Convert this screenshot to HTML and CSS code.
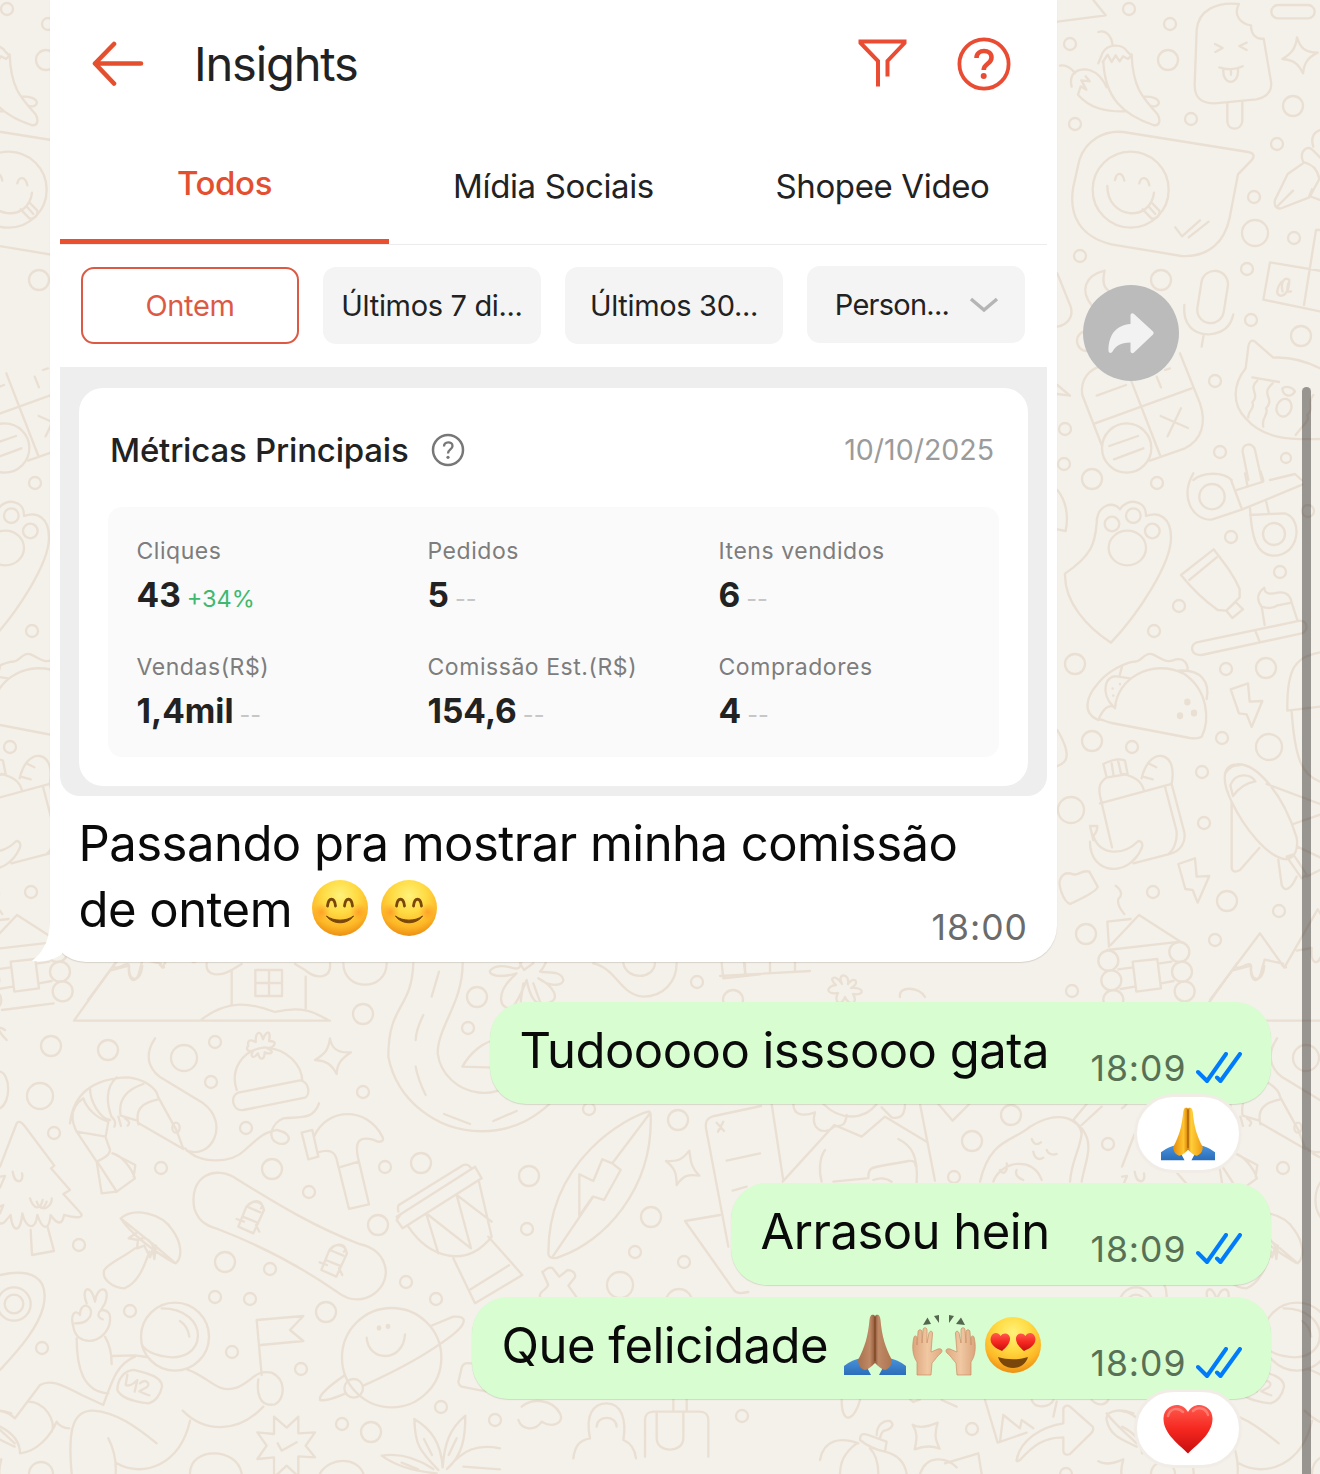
FILE: index.html
```html
<!DOCTYPE html>
<html lang="pt-BR">
<head>
<meta charset="utf-8">
<title>Insights</title>
<link rel="stylesheet" href="styles.css">
</head>
<body>
<svg class="defs" width="0" height="0" aria-hidden="true">
<defs>
<radialGradient id="face" cx=".5" cy=".28" r=".74"><stop offset="0" stop-color="#fff27a"/><stop offset=".4" stop-color="#ffdc45"/><stop offset=".75" stop-color="#fdb827"/><stop offset="1" stop-color="#ea8a10"/></radialGradient>
<radialGradient id="blush"><stop offset="0" stop-color="#ff7b1c" stop-opacity=".5"/><stop offset="1" stop-color="#ff8b1c" stop-opacity="0"/></radialGradient>
<linearGradient id="heart" x1="0" y1="0" x2="0" y2="1"><stop offset="0" stop-color="#ff5a50"/><stop offset=".5" stop-color="#f5281f"/><stop offset="1" stop-color="#c70d10"/></linearGradient>
<linearGradient id="gold" x1="0" x2="1"><stop offset="0" stop-color="#e88b08"/><stop offset=".35" stop-color="#ffc52e"/><stop offset=".5" stop-color="#d98208"/><stop offset=".6" stop-color="#ffd13a"/><stop offset="1" stop-color="#ee9a12"/></linearGradient>
<linearGradient id="tan" x1="0" x2="1"><stop offset="0" stop-color="#a9714d"/><stop offset=".35" stop-color="#c08a66"/><stop offset=".5" stop-color="#8f5a3d"/><stop offset=".6" stop-color="#c08a66"/><stop offset="1" stop-color="#ad7450"/></linearGradient>
<linearGradient id="sleeve" x1="0" y1="0" x2="0" y2="1"><stop offset="0" stop-color="#4a93dc"/><stop offset="1" stop-color="#2b6db8"/></linearGradient>
<linearGradient id="palm" x1="0" x2="1"><stop offset="0" stop-color="#dca57c"/><stop offset=".5" stop-color="#f0c8a2"/><stop offset="1" stop-color="#e0aa82"/></linearGradient>
<symbol id="smile" viewBox="0 0 56 56">
<circle cx="28" cy="28" r="28" fill="url(#face)"/>
<circle cx="9.500" cy="32" r="9" fill="url(#blush)"/><circle cx="46.500" cy="32" r="9" fill="url(#blush)"/>
<path d="M15.500 26c1-9 7-9 8 0M32.500 26c1-9 7-9 8 0" fill="none" stroke="#7a4609" stroke-width="2.800" stroke-linecap="round"/>
<path d="M14.500 36c6 9 21 9 27 0-7 5.500-20 5.500-27 0z" fill="#7a4609" stroke="#7a4609" stroke-linejoin="round"/>
</symbol>
<symbol id="love" viewBox="0 0 56 56">
<circle cx="28" cy="28" r="28" fill="url(#face)"/>
<path d="M17 34C9 31 4 26 6 20c1.500-5 7.500-5 9.500-1 3-4 9-3 9.500 2 .4 5-3.500 9-8 13zM39 34c8-3 13-8 11-14-1.500-5-7.500-5-9.500-1-3-4-9-3-9.500 2-.4 5 3.500 9 8 13z" fill="url(#heart)"/>
<path d="M13 40c9 3 21 3 30 0-2 7-8 11-15 11s-13-4-15-11z" fill="#7a4609"/>
</symbol>
<symbol id="pray-shape" viewBox="0 0 62 62">
<path d="M0 61V52q9-7 18-8l9 17zM62 61V52q-9-7-18-8l-9 17z" fill="url(#sleeve)"/>
<path d="M30 1c-3-1-4 1-4.500 5C24 22 21 33 14 46c0 5 3 9 7 10 4-1 7-4 10-7 3 3 6 6 10 7 4-1 7-5 7-10C41 33 38 22 36.500 6 36 2 35 0 32 1l-1 1z"/>
<path d="M31 3v44" stroke="#7a3c0c" stroke-opacity=".65" stroke-width="1.300" fill="none"/>
</symbol>
<symbol id="hands" viewBox="0 0 64 62">
<path d="M11 11l4.500-7.500L19 10zM22 2l5-1v8zM37 1l5 1-5 7zM44 10l5-6.500L53 11z" fill="#55664f"/>
<g id="hand" fill="url(#palm)" stroke="#c98e65" stroke-width=".7"><path d="M5 61V48C0 41 0 31 2 23c1-2 3-1 3 1l0 7 1-13c0-3 4-3 4 0v11l1-13c0-3 4-3 4 0v13l2-10c1-3 4-2 3.500 1L19 38l7-3c4-1 5 2 3 4-3 2-6 7-9 10l-1 12z"/></g>
<use href="#hand" transform="matrix(-1 0 0 1 64 0)"/>
</symbol>
<symbol id="checks" viewBox="0 0 46 32"><path d="M2 20l9 9L30 2M21 25.500l3.500 3.500L44 2" fill="none" stroke="#007bfc" stroke-width="4" stroke-linecap="round" stroke-linejoin="round"/></symbol>

<g id="tile">
<g transform="scale(.33333) translate(3150 0)">
<path d="M130 0l37 46L0 68M145 96c25-8 40 15 43 40M145 190l12-30c15-30 60-30 75-5l12 12-10 10-15-8-10 15-12-18-12 20-12-22-15 22M160 185c5 110 60 160 150 190 20 5 22-15 13-32-45-50-75-80-78-180M30 197c20-5 35 10 45 22M65 260c-15-60 55-65 85-30 10 12 15 20 20 32M84 284c35 40 80 52 145 50M84 284l8-25 17 10-15-28 25 3-12-15M280 290c25-2 45 5 47 18-2 12-15 12-25 10"/>
<path d="M567 12C500 5 445 30 440 90L434 255c0 40 20 55 60 55l125-12c35-8 48-25 44-53L641 116c-25 3-38-15-38-40-30-5-55-30-36-64zM495 132l23 12-22 12M590 128l-22 10 22 12M508 202c20 8 50 8 70-3M520 208c-4 50 48 50 44 0v-4M543 208v16M532 310v55c2 28 40 28 45 0v-60M741 112c10 32 24 45 62 46-30 15-40 30-44 62-15-30-28-40-62-43 26-15 40-30 44-65z"/>
<rect x="664" y="15" width="130" height="40" rx="20"/>
<path d="M220 396l375 60c15 3 20 10 12 22l-43 45-25 130c-15 70-60 120-145 115l-210-35C90 710 55 645 70 560l18-80c20-60 75-90 132-84zM195 540c5-25 22-25 28 2M268 550c5-23 25-20 30 6M172 558c0 100 130 110 140 20M278 628l27 28c15 2 26-10 23-24l-25-26M298 622l18 20M376 682l20 27 54-48M416 712l60-47"/>
<circle cx="242" cy="569" r="114"/>
<path d="M810 600l-32-12 8-20M675 600l38-78 50-35c20 5 40 20 45 50l-30 55-82 32c-15 5-25-5-21-24zM683 618l46-46M760 487c-15-35 15-55 30-35l40 40M790 440c-10-30 5-45 20-50M810 690h-12l-36 225M660 787l160 27M660 787l-20 112 170 35M695 845c-15 20-18 38-5 42 18 2 28-20 28-48-22-12-25 20-20 35M715 850c-5 20-5 28 8 24"/>
<rect x="448" y="812" width="80" height="158" rx="40" transform="rotate(9 488 890)"/>
<path d="M403 915c-5 55 25 90 75 88 40-3 65-25 72-60M461 1005l-6 35M164 812c-60 15-75 60-38 105M164 812c-10 40 0 60 30 70M22 820l40 100c10 30-10 55-40 60M22 1155l38 32-38-5"/>
<path d="M165 1095c-50 10-75 45-68 90l58 150M235 1120l95 245M135 1270l290-105M390 1060l60 150c20 60 5 110-45 135l-105 37M140 1187l88-32M320 1130l13 32M360 1105l-15 5M332 1248l82 36M393 1225l-40 84M178 1338l86-30M192 1378l88-33"/>
<circle cx="230" cy="1344" r="74"/>
<path d="M810 1105c-40-20-90-35-140-32l-55-48c-10-8-18 0-20 15l-8 65c-40 50-40 110 0 150 50 60 130 65 223 62M607 1132l80 14M622 1142c-30 25 10 40-15 65 10 20-15 25-12 45M668 1150c-40 35 10 45-20 75 10 20-15 25-8 55M697 1166c10-10 30-5 38 8-10 18-35 18-38-8zM790 1185c-20 20 5 40-18 60 8 20-10 25-35 60"/>
<ellipse cx="702" cy="1223" rx="22" ry="27" transform="rotate(20 702 1223)"/>
<path d="M595 1440l-17-85c-2-25 30-30 37-5l20 90M660 1440l75-18 20 18M430 1440c30-25 90-25 115 0"/>
</g>
<g transform="scale(.33333) translate(3150 1440)">
<circle cx="486" cy="50" r="38"/><circle cx="672" cy="162" r="33"/>
<path d="M430-20c-40 70-5 140 55 139l90-30 182-75M543 0l32 85M560 30l80-25M585-20l8 40M632-25l8 25M600 85c5 90 20 140 70 142 80 0 90-110 35-127l-105 5M648 62l8 35"/>
<path d="M140 130c0-55 50-70 70-42 20-35 80-30 78 20 40-15 75 5 75 65 0 80-100 230-180 315-70-45-140-120-138-207 80-55 90-90 95-151z"/>
<circle cx="186" cy="132" r="22"/><circle cx="250" cy="107" r="22"/><circle cx="307" cy="153" r="22"/><ellipse cx="232" cy="204" rx="56" ry="52"/>
<path d="M22 30c25 30 35 75 25 123l-25-5M491 208l-98 77c40 50 75 80 110 105l26 2 40-40v-25c-20-45-40-70-78-119zM500 232l-82 68M529 392l28-26 22 22-32 26zM440 487l310-65c25 2 25 30 5 38l-300 65c-35 0-35-28-15-38zM617 455l12 30M635 380l9 55M635 380c-20-25-8-45 8-57 0 20 20 20 40 15 30-5 40 15 42 30l-42 8c-12 8-30 10-48 4zM725 368l17 52"/>
<path d="M145 720c-50-20-35-70-5-105 35-45 85-65 110-70 25 5 30-30 58-22 25 10 40 30 70 15 25-5 35 15 35 30M145 720c20-50 45-45 50-35 5-90 110-150 205-105 75 50 80 140 55 190-10 8-20 5-35 4l-235-45c-25-5-30-15-40-9zM208 590l8-30M190 680c-40-40-25-100 15-90l35 5M385 572c70-5 95 35 85 85M188 625v1M210 612v1M190 646v1M542 628l52-18 5 55 38-2-32 78-15-38-23-3z"/>
<path d="M390 706v2M412 665v2M432 698v2" stroke-width="19"/>
<path d="M810 517c-70 15-100 40-98 175l98-12M725 695c10 140 30 190 85 210M22 750c35 60 40 95 0 108"/>
<path d="M170 892l-10-40c20-10 45-20 65-10l8 40-60 10M185 850l6 38M205 845l8 36M170 892c-20 15-25 25-20 55l36 155M150 970l215-58M220 882c35 10 55 20 62 50M275 895c10-45 35-70 60-67 30 5 38 40 30 85M295 850l24 12M278 890l30 8M345 920l34 130c5 30-8 60-22 70M365 912l38 145c5 30-10 55-43 65l-110 28M130 1080l-10-42h22c0 20-5 20-12 30 20 60 90 60 135 15 10 0 15 10 10 22-40 90-155 80-155-20"/>
<path d="M545 965c-30-60-30-110 15-112 60-5 140 90 180 220 5 35-5 60-30 65-60-5-130-100-165-173zM549 948l-8-32c15-40 60-35 75-12-30 5-50 20-67 44zM525 880c15-20 25-25 45-25M545 965v200c5 15 15 10 25 5l58-66M650 912l160 60M730 1032l80-28M685 1140l10 75c10 25 30 10 45-25M710 1130l45 65 15-12-40-60zM742 1100l68 32M770 1190l40-20M32 1195c10-20 30-15 38-12 15 5 25-15 48-8l25 45c0 15-70 45-82 52-20-5-40-60-29-77zM385 1152l50-17 5 55 38-2-35 80-15-38-22-3zM197 1217c20 15 20 30 8 40-5 20 10 35 18 45M177 1400l-5-75 70-8M182 1395l85-90 125 80-220 25"/>
<circle cx="175" cy="1442" r="30"/><circle cx="184" cy="1501" r="30"/><circle cx="190" cy="1560" r="30"/><circle cx="388" cy="1416" r="30"/><circle cx="396" cy="1475" r="30"/><circle cx="404" cy="1534" r="30"/>
<path d="M205 1468l43-6M212 1527l42-7M330 1450l34-5M333 1510l38-7M248 1445l74-8 11 88-74 10zM222 1590l155-20M480 1560l150-200 73 103 100-175 40 60M545 1472l58-15c-5 50 25 60 33 10l8-28 55 12M740 1412l45-8c-5 50 20 50 25 30"/>
</g>
<g transform="scale(.33333) translate(0 2880)">
<path d="M345 10L222 182H990M345 10c-10 10 0 18 20 8 15-8 25-10 22 10 0 40 35 40 40-10M480 15l12 7M695 30v105M917 50v95M620 10c-5 40 40 40 75 20l30-18M990 10c5 45-40 50-75 20l-30-18M605 178c80-60 145-50 220-22 80-20 120 0 160 25M766 30h80v78h-80zM807 30v78M766 69h80M1030 10c0 85 130 85 130 0M1240 10c-5 140-75 120-75 280a285 275 0 0 0 560 0M1388 10c0 120-75 190-75 270a140 136 0 0 0 270 30M1317 35l-22 75M1270 165c-15 30-22 50-23 75M1247 320c5 30 15 55 30 85M1332 462l78 30M1480 483l70-30M1555 325l-168-5c20-35 60-80 120-85"/>
<path d="M465 235c-40 60-10 105 30 125l115 70c80 60 25 170-50 142M210 490c10-90 70-135 175-138 45 5 85 30 90 60l55 100 20 55-135-78M230 515l60 90 15 95 45-5 55-40c-10-30-40-70-68-75M230 515c-25-50-10-80 20-100 10 30 40 60 75 70l-8 45zM290 605c20-10 40-20 40-35l-12-35M270 385c0 40 30 90 60 95M350 352c-35 30-30 80-15 120M430 372c-60 20-75 55-68 95l50 15M475 418c-50 10-70 30-60 75M335 470c10 10 12 22 8 30M355 470l8 28M375 475c15 10 15 15 8 22M295 610l55 85M338 580l68 35-5 35M555 565c45 50 140 45 180 5 60-55 60-50 95-60 55 10 40 50 5 40-40-15-15-65 15-75 50-5 90 5 107-45"/>
<ellipse cx="528" cy="503" rx="11" ry="15"/>
<path d="M710 390c-20-60 15-120 85-128 70 5 110 55 112 100M715 398l185-37c30 5 30 45 15 52l-185 37c-35 5-40-45-15-52zM745 258c-5-20 10-20 22-12 0-35 15-35 22-8 10-30 25-25 18 5 30 0 15 20-5 22 25 10 10 20-8 12 0 25-15 25-20 3-15 20-25 8-14-8-15 5-25-5-15-14zM990 235c5 32 24 45 63 42-30 20-42 35-43 65-15-28-30-40-65-42 30-18 40-30 45-65zM905 518l32-8 18 80-30 8zM942 530c40-90 160-90 205 0 8 15-8 20-25 10-50-15-60 10-45 65l30 128-60 14-35-140c-5-35-25-40-58-30M1018 622l58-17"/>
<path d="M20 240c-35-35-25-45-5-30M0 335c30 5 35 90 0 110M0 620l48-125c5-15 15-10 25 2l90 120-10 8 57 65-20 12 50 55c15 15-5 20-48 8-5 30-20 30-40 0-5 50-25 45-40 0-5 50-35 40-45-5-5 60-30 60-35 5-15 15-20 30-32 25M92 810l4 75 66-12-20-75M0 650l15-2-15 35M38 635c5 40 35 35 28 5M90 715c10 30 30 40 38 5M122 740c10 15 35-5 33-25M110 725c10 25 20 25 30 0M0 740l10-5-10 25"/>
<path d="M362 775c40-35 125-15 155 35 30 40 30 85 10 100l-65-55zM362 775c30 45 100 100 160 133M408 820l-22 15 28 5-3 25 22-8 17 35 8-25 5 30 5-40M405 865c-40 30-80 45-92 65-10 30 30 55 60 55 40-15 60-65 75-110M415 840c30-20 45 20 50 30"/>
<path d="M715 660c-70-50-150-10-132 85 10 30 25 50 70 62 130 50 260 120 360 190 80 60 165-20 140-85-10-30-30-50-75-60-130-50-240-115-363-192z"/>
<path id="binding" d="M735 750c10-35 55-30 57 0l-32 70-45-20zM728 770l42 17M741 740l40 17M745 735c30-25 50 0 38 10M710 777l22 8M768 795l10 20"/><use href="#binding" x="249" y="130"/>
<path d="M1200 765l-10 15 18 25 237-150-20-35-235 150M1195 755c-3-20 0-20 10-25l185-115c15-5 20 5 25 12M1225 800c60 90 170 130 250 30l-38-165M1280 765l35 115M1285 765l128 100-43-160 105 80M1360 895l65 135 142-85-102-115M1412 988l115-72"/>
<path d="M0 945c90-20 150 5 130 95-15 60-65 120-130 190"/><circle cx="42" cy="1032" r="50"/><circle cx="42" cy="1032" r="28"/>
<path d="M260 1030c-20-50 15-60 25-5 5-50 50-50 30 5l-12 20c30 0 30 20 25 45-20 60-100 65-108 5-10-35 5-55 20-35 0-45 45-30 30 5-10 15-20 20-45 20M303 1050c-15 15-5 25 5 28M230 1135c0 90 20 160 95 165M315 1130c15 25 20 50 20 82M335 1188l70-2 35 5M405 1190c-50 20-65 60-95 145l-65-30c-50-25-90-50-125-30l-75 100c-10-10-25-20-45-22"/>
<circle cx="525" cy="1130" r="102"/><path d="M485 1045c150 0 140 175 0 143-25-5-45-15-58-30M540 1083c15 10 25 25 28 47M352 1290c0-30 20-60 50-60 40 10 85 20 84 50-5 25-20 45-40 50-50-5-85-20-94-40zM382 1245l-5 30c10 5 20 0 35-15l-8 35M420 1270c15-15 35 0 20 12l-22 12c10 5 20 10 30 12M560 1228c65 20 90 75 150 55 50-20 55-55 105-45 45 20 40 80 10 95-50 10-55-40-50-75M785 1245l-15-165 140-12-40 42 40 33-128 12M790 1340c-80 85-180 75-242 12M85 1325c50 0 85 60 70 90M0 1400c40 20 60 45 60 80M60 1480c50-5 90-50 110-95 5 10 20 20 38 20M215 1540c-10-110-5-190 65-188 70 5 130 50 190 98M325 1435c15 30 25 60 22 105M350 1510c80 45 190 5 220-128"/>
<circle cx="1175" cy="1193" r="149"/><circle cx="1061" cy="1285" r="28"/>
<path d="M1100 1133c5 75 110 75 115-10M1090 1277c90-40 180-85 265-150 45-35 50-60 5-57l-68 28M1035 1245c-50 35-80 60-75 75 25 5 50-10 78-20"/>
<path d="M1137 1103v2M1164 1098v2" stroke-width="14"/>
<path d="M822 1370l38 33 35-33v50l50-3-28 40 28 35-50-3v60l-35-32-38 35v-60l-50 5 28-40-28-40 50 5zM833 1450l12 22 45-25M570 1540c0-80 140-80 155 0M960 1540c30-50 110-50 130 0M1315 1530c-60-60-70-80-72-153 50 30 80 70 85 145 5-70 20-115 68-155 0 70-10 120-55 160 50-60 90-75 159-62M1310 1540c-60-5-120-20-165-53 60-10 110 10 155 40M1272 1437l24 48M1370 1435l-24 50M1205 1508l50 20M1390 1520l110 8"/>
<path d="M1460 1295l-75-15c-10-5-12-15-8-22l8-35c5-15 15-15 35-12"/>
</g>
<g transform="scale(.33333) translate(1320 2880)">
<path d="M245 0c-5 50-30 10-75 20-45 15-10 40 60 20-70 60-50 110-15 105 20-20 35-60 45-85 10 50 25 80 60 70 50-10 15-55-25-75 40 30 75 20 75 5-5-30-50-20-70-25 10-10 15-20 20-35M240 10l12 20 28-20M250 70l-8 55M280 70l20 55M460 10c70 15 80 95 150 100 60 0 100-45 100-100M550 10c10 50 90 50 95 0M845 10l5 45 110-12M912 10l5 35M625 455c-60 15-300 140-300 425 0 15 20 18 35 10 130-45 280-200 272-425 0-8-5-12-7-10zM630 460L517 610l25 20-50 90-32-10-122 180M517 610l-30-12-27 65-42-20v125l40-58M748 572c5 35 5 50 30 75-35-5-48 0-68 28 0-35-5-50-32-72 35 3 50-5 70-31zM310 935c10-10 20-15 28-10l20 25 25-20c15 0 25 10 22 22l-20 25 25 35M300 1010c-5-15 20-20 25-35l-18-40M865 860L798 505c-2-18 0-30 25-37l140-30M960 580l-100 22M920 680l-42 12M840 765l-105 18 145 205c10 15 25 12 45 8M830 488l22 25M850 485l-16 30"/>
<path d="M245 1340c30-25 90-25 115 20 15 30-25 45-55 25-20 30-60 25-70-5M400 1495c5-40 20-55 50-60-15-70 10-105 50-105 45 0 60 50 50 110 25 10 35 30 38 55M470 1400c0-35 60-35 60 0M615 1490v-110c0-15 10-25 25-25h140c15 0 25 10 25 25v110M650 1355v80c0 45 80 45 80 0v-80M700 1350v-40M740 1350v-40"/>
</g>
<g transform="scale(.33333) translate(1980 3270)">
<path d="M335 42l35 230M400 42c0 40 40 35 65 25-15 50 25 70 55 45M735 42c0 40-20 45-40 40l-30-30M560 75c-5 40-20 30-40 35M490 42c50 50 120 50 160 0M368 275l155-170 82 35 70-60 125 75M780 42l45 230M495 180c-15 20-20 60-10 95M715 147c40 20 60 50 55 130M520 275l100-10M625 265c0-40 5-30 120-52 20-2 20 5 22 15M640 270c20-8 40-5 55 5M835 42l43 50 50-50"/>
<path d="M960 275c30-130 100-120 150-165 90-55 150-20 155 20-5 50-30 80-35 145M1265 115c40 50 10 100 0 160M1240 90l40-48M1265 105l60-55M1240 90l20 20M1000 275c20-60 120-80 145-5M1115 147c5 15 15 20 28 10M1120 185c5 25 20 25 30 18M1160 180c5 15 20 15 30 12M1020 240c10 20 25 0 20-20M1070 240c-10 20 20 30 20 30"/>
</g>
<g transform="scale(.33333) translate(2460 3900)">
<path d="M65 300c0 80 40 60 55 0M270 298l10 8 20-8M365 300l45 20M495 300l38 128 87-30M540 425l10-80 50 40 5-25 35 25M635 300c10 30 60 20 65 0M700 350l10-45M815 300c20 20 40 15 50 0M590 480c10-60 75-100 140-110v-45c5-10 15-10 20-5l68 60c5 10 0 15-5 20l-63 62c-10 5-20 0-20-10v-40c-60 0-90 25-130 68-8 5-12 5-10 0zM278 374c20 12 50 5 75-6-10 35-8 50 6 78-25-10-50-8-75 2 8-35 8-50-6-74zM835 484c20 12 50 5 75-6-10 35-8 50 6 78M120 420c0-20 10-20 25-15l55 20-5 30c-25-5-50-15-75-35zM170 405c0-30 20-45 40-42 15 10 5 25-20 30-5 5-8 10-10 20M0 480c10-60 60-70 115-50M195 455c40 10 60 35 65 67M110 430c-40 30-50 60-50 97M150 445c20 20 25 50 25 77M375 490l100-30 10 62M300 522c20-60 80-50 110-20M940 340c-40-15-85-10-80 20 10 50 50 60 90 80M860 340c30 40 60 60 90 90"/>
</g>
<g class="dots">
<circle cx="1070" cy="44" r="6"/><circle cx="1129" cy="9" r="6"/><circle cx="1170" cy="24" r="6"/><circle cx="1168" cy="60" r="10"/><circle cx="1075" cy="124" r="6"/><circle cx="1191" cy="119" r="6"/><circle cx="1293" cy="106" r="10"/><circle cx="1277" cy="144" r="6"/><circle cx="1254" cy="197" r="6"/><circle cx="1255" cy="233" r="13"/><circle cx="1294" cy="238" r="6"/><circle cx="1247" cy="269" r="6"/><circle cx="1080" cy="256" r="6"/><circle cx="1161" cy="280" r="10"/><circle cx="1087" cy="341" r="10"/><circle cx="1251" cy="320" r="6"/><circle cx="1301" cy="336" r="10"/><circle cx="1215" cy="381" r="6"/><circle cx="1065" cy="429" r="6"/><circle cx="1064" cy="464" r="6"/><circle cx="1092" cy="479" r="10"/><circle cx="1220" cy="452" r="6"/><circle cx="1286" cy="458" r="5"/><circle cx="1157" cy="483" r="6"/><circle cx="1308" cy="511" r="6"/><circle cx="1231" cy="537" r="6"/><circle cx="1280" cy="572" r="6"/><circle cx="1179" cy="606" r="6"/><circle cx="1154" cy="631" r="6"/><circle cx="1075" cy="664" r="10"/><circle cx="1226" cy="669" r="6"/><circle cx="1266" cy="668" r="10"/><circle cx="1092" cy="741" r="10"/><circle cx="1132" cy="747" r="6"/><circle cx="1222" cy="738" r="6"/><circle cx="1269" cy="747" r="13"/><circle cx="1202" cy="772" r="6"/><circle cx="1071" cy="810" r="13"/><circle cx="1204" cy="823" r="6"/><circle cx="1153" cy="892" r="6"/><circle cx="1227" cy="901" r="10"/><circle cx="1279" cy="911" r="6"/><circle cx="1086" cy="934" r="10"/><circle cx="1215" cy="940" r="6"/><circle cx="1072" cy="991" r="6"/>
<circle cx="51" cy="1046" r="10"/><circle cx="108" cy="1050" r="10"/><circle cx="40" cy="1096" r="13"/><circle cx="184" cy="1058" r="13"/><circle cx="215" cy="1042" r="6"/><circle cx="211" cy="1082" r="6"/><circle cx="363" cy="1014" r="10"/><circle cx="477" cy="997" r="10"/><circle cx="468" cy="1028" r="6"/><circle cx="363" cy="1092" r="6"/><circle cx="246" cy="1128" r="6"/><circle cx="54" cy="1133" r="6"/><circle cx="161" cy="1168" r="6"/><circle cx="272" cy="1169" r="10"/><circle cx="309" cy="1192" r="6"/><circle cx="385" cy="1167" r="6"/><circle cx="421" cy="1163" r="10"/><circle cx="378" cy="1225" r="10"/><circle cx="79" cy="1245" r="6"/><circle cx="225" cy="1262" r="10"/><circle cx="270" cy="1269" r="6"/><circle cx="215" cy="1297" r="6"/><circle cx="250" cy="1299" r="6"/><circle cx="130" cy="1311" r="6"/><circle cx="326" cy="1312" r="10"/><circle cx="406" cy="1282" r="6"/><circle cx="436" cy="1299" r="6"/><circle cx="42" cy="1348" r="6"/><circle cx="232" cy="1352" r="6"/><circle cx="301" cy="1369" r="6"/><circle cx="342" cy="1424" r="6"/><circle cx="371" cy="1432" r="10"/><circle cx="441" cy="1407" r="6"/><circle cx="495" cy="1420" r="6"/><circle cx="41" cy="1474" r="12"/>
<circle cx="697" cy="982" r="6"/><circle cx="733" cy="1000" r="10"/><circle cx="589" cy="1109" r="6"/><circle cx="678" cy="1120" r="10"/><circle cx="529" cy="1176" r="10"/><circle cx="651" cy="1217" r="10"/><circle cx="527" cy="1229" r="6"/><circle cx="635" cy="1252" r="6"/><circle cx="684" cy="1262" r="6"/><circle cx="620" cy="1285" r="13"/><circle cx="679" cy="1302" r="13"/><circle cx="1011" cy="1115" r="10"/><circle cx="972" cy="1141" r="10"/><circle cx="954" cy="1177" r="6"/><circle cx="1108" cy="1144" r="6"/><circle cx="972" cy="1429" r="6"/><circle cx="1066" cy="1474" r="6"/><circle cx="742" cy="1416" r="6"/>
<path d="M842 984c-6-11 8-12 6 0 6-9 13-1 3 4 14-1 14 8 2 6 6 10-4 13-8 3-4 11-12 5-7-4-13 2-12-7-2-8-9-8 0-11 6-1zM720 976l90-5M745 974v-10M770 973v-10M795 972v-10M900 997c-2-12 20-10 25 0"/>
</g>
</g>
</defs>
</svg>

<main class="chat">
<svg class="wallpaper" viewBox="0 0 1320 1474" aria-hidden="true"><use href="#tile"/><use href="#tile" x="-1122"/><use href="#tile" x="1122"/></svg>

<div class="row-in">
<article class="bubble-in">
<svg class="tail" viewBox="0 0 36 60" aria-hidden="true"><path d="M18 0v16c0 22-6 33-18 43 12 1.500 22-1 30-7l6-20z" fill="#fff"/></svg>
<section class="shot">
<header class="bar">
<svg width="52" height="46" viewBox="0 0 52 46"><path d="M22 3L3 22.500l19 20M3 22.500h46" fill="none" stroke="#e4502f" stroke-width="4.600" stroke-linecap="round" stroke-linejoin="round"/></svg>
<h1><span class="t-title">Insights</span></h1>
<svg class="funnel" width="50" height="50" viewBox="0 0 50 50"><path d="M20 47.500V22L2.500 4V2.500h44V4L29.500 22v15.500" fill="none" stroke="#e94b33" stroke-width="4"/></svg>
<svg class="help" width="54" height="54" viewBox="0 0 54 54"><circle cx="27" cy="27" r="24.600" fill="none" stroke="#e94b33" stroke-width="3.800"/><path d="M19.500 21c0-9.500 15-9 15-.5 0 6.500-7.800 6-7.800 12.500" fill="none" stroke="#e94b33" stroke-width="4.600"/><circle cx="26.700" cy="39" r="3" fill="#e94b33"/></svg>
</header>
<nav class="tabs">
<a class="tab active"><span class="t-todos">Todos</span></a>
<a class="tab"><span class="t-midia">Mídia Sociais</span></a>
<a class="tab"><span class="t-video">Shopee Video</span></a>
</nav>
<div class="chips">
<span class="chip on"><span class="t-ontem">Ontem</span></span>
<span class="chip"><span class="t-u7">Últimos 7 di...</span></span>
<span class="chip"><span class="t-u30">Últimos 30...</span></span>
<span class="chip last"><span class="t-person">Person...</span><svg width="30" height="18" viewBox="0 0 30 18"><path d="M2 3l13 11L28 3" fill="none" stroke="#b5b5b5" stroke-width="3.500"/></svg></span>
</div>
<div class="board">
<div class="card">
<div class="head"><h2><span class="t-met">Métricas Principais</span></h2>
<svg width="34" height="34" viewBox="0 0 34 34"><circle cx="17" cy="17" r="15" fill="none" stroke="#777" stroke-width="2.500"/><path d="M13 13.500c0-5.500 8.500-5.500 8.500-.5 0 3.500-4.500 3.500-4.500 7.500" fill="none" stroke="#777" stroke-width="2.300"/><circle cx="17" cy="24.300" r="1.600" fill="#777"/></svg>
<time>10/10/2025</time></div>
<dl class="stats">
<div><dt>Cliques</dt><dd><b>43</b><i class="up">+34%</i></dd></div>
<div><dt>Pedidos</dt><dd><b>5</b><i>--</i></dd></div>
<div><dt>Itens vendidos</dt><dd><b>6</b><i>--</i></dd></div>
<div><dt>Vendas(R$)</dt><dd><b>1,4mil</b><i>--</i></dd></div>
<div><dt>Comissão Est.(R$)</dt><dd><b>154,6</b><i>--</i></dd></div>
<div><dt>Compradores</dt><dd><b>4</b><i>--</i></dd></div>
</dl>
</div>
</div>
</section>
<div class="caption">
<p>Passando pra mostrar minha comissão</p>
<p class="line2"><span class="t-cap2">de ontem</span><svg class="em" role="img" aria-label="😊"><use href="#smile"/></svg><svg class="em" role="img" aria-label="😊"><use href="#smile"/></svg><time class="time">18:00</time></p>
</div>
</article>
<button class="forward" aria-label="Encaminhar"><svg width="46" height="41" viewBox="0 0 46 41"><path d="M22.500 11V2.500c0-2 2-3 3.500-1.500l18.500 17c1.500 1.500 1.500 2.500 0 4l-18.500 17.500c-1.500 1.500-3.500.5-3.500-1.500V29.500C12 29.500 8 33 4.500 38.500 3 41 .5 40 .5 37.500.5 22 8 12 22.500 11z" fill="#f2f2f3"/></svg></button>
</div>

<div class="out o1"><span>Tudooooo isssooo gata</span><time class="time">18:09</time><svg class="ck"><use href="#checks"/></svg>
<span class="react"><svg width="54" height="54" fill="url(#gold)" role="img" aria-label="🙏"><use href="#pray-shape"/></svg></span></div>
<div class="out o2"><span>Arrasou hein</span><time class="time">18:09</time><svg class="ck"><use href="#checks"/></svg></div>
<div class="out o3"><span>Que felicidade</span><svg class="e1" fill="url(#tan)" role="img" aria-label="🙏🏽"><use href="#pray-shape"/></svg><svg class="e2" role="img" aria-label="🙌🏼"><use href="#hands"/></svg><svg class="e3" role="img" aria-label="😍"><use href="#love"/></svg><time class="time">18:09</time><svg class="ck"><use href="#checks"/></svg>
<span class="react"><svg width="50" height="50" viewBox="0 0 50 50" role="img" aria-label="❤️"><path d="M25 49.500C17 41 0 30 .5 14 1 0 19-4 25 8 31-4 49 0 49.500 14 50 30 33 41 25 49.500z" fill="url(#heart)"/><path d="M5 12C7 4 15 3 20 8M30 7c5-5 13-3 15 4" fill="none" stroke="#ff9a8e" stroke-opacity=".6" stroke-width="2.500" stroke-linecap="round"/></svg></span></div>
<div class="scroll"></div>
</main>
</body>
</html>
```
FILE: styles.css
```css
* { box-sizing: border-box; }
body { margin: 0; font-family: Inter, "Liberation Sans", sans-serif; color: #0a0a0a; }
h1, h2, p, dl, dd, dt { margin: 0; font-weight: 400; }
.defs { position: absolute; }
svg { display: block; flex: none; }
span { white-space: nowrap; }
.chat { position: relative; width: 1320px; height: 1474px; overflow: hidden; background: #f4f1ea; display: flex; flex-direction: column; }
.wallpaper { position: absolute; inset: 0; width: 1320px; height: 1474px; fill: none; stroke: #eadfd3; stroke-width: 7; stroke-linecap: round; stroke-linejoin: round; }
.dots { stroke-width: 2.3; }

.row-in { position: relative; display: flex; gap: 26px; padding-left: 50px; height: 962px; align-items: flex-start; }
.bubble-in { position: relative; width: 1007px; height: 962px; padding: 0 10px; background: #fff; border-radius: 0 0 36px 36px; box-shadow: 0 1px 1px rgba(90, 70, 50, .18); }
.tail { position: absolute; left: -18px; bottom: 0; width: 36px; height: 60px; }
.shot { height: 796px; border-radius: 0 0 20px 20px; overflow: hidden; color: #222; }
.bar { display: flex; align-items: center; height: 128px; padding: 0 36px 0 32px; }
.bar h1 { flex: 1; padding-left: 50px; font-size: 47px; line-height: 60px; letter-spacing: -1.15px; }
.funnel { margin-right: 49px; }
.tabs { display: flex; height: 117px; border-bottom: 1px solid #ececec; }
.tab { width: 329px; height: 117px; padding-top: 38px; text-align: center; font-size: 33px; line-height: 40px; letter-spacing: -.36px; }
.tab.active { height: 116px; padding-top: 35px; color: #e4502f; font-weight: 500; border-bottom: 5px solid #e9502f; }
.chips { display: flex; gap: 24px; height: 122px; padding: 22px 22px 0 21px; }
.chip { display: flex; align-items: center; justify-content: center; flex: none; width: 218px; height: 77px; border-radius: 13px; background: #f4f4f4; font-size: 29px; letter-spacing: -.33px; }
.chip.on { border: 2px solid #dc5a44; background: #fff; color: #dc5a44; }
.chip.last { gap: 20px; margin-top: -1px; padding-left: 2px; letter-spacing: -.75px; }
.board { height: 429px; padding: 21px 19px 10px; background: #eee; }
.card { height: 398px; padding: 0 29px; background: #fff; border-radius: 24px; }
.head { display: flex; align-items: center; height: 119px; padding: 4px 5px 0 2px; }
.head h2 { font-size: 33px; font-weight: 500; letter-spacing: -.2px; margin-right: 22px; }
.head time { margin-left: auto; font-size: 28.5px; color: #9b9b9b; }
.stats { display: grid; grid-template-columns: repeat(3, 291px); grid-auto-rows: 116px; height: 250px; padding: 27px 0 0 28.5px; background: #fafafa; border-radius: 14px; }
dt { font-size: 23px; line-height: 34px; letter-spacing: .55px; color: #7d7d7d; }
dd { display: flex; align-items: baseline; gap: 6px; line-height: 54px; }
dd b { font-size: 33.5px; font-weight: 700; }
dd i { font-style: normal; font-size: 23.5px; color: #c6c6c6; }
dd i.up { color: #3fb871; }

.caption { padding: 15px 20px 0 18.5px; font-size: 49px; line-height: 66px; letter-spacing: -.52px; }
.line2 { display: flex; align-items: center; height: 66px; }
.em { width: 56px; height: 56px; margin: -4px 0 0 13px; }
.t-cap2 { margin-right: 7px; }
.time { font-size: 35.5px; line-height: 44px; letter-spacing: 1px; color: #6b6b6b; }
.caption .time { margin: 35px -1px 0 auto; }
.forward { display: flex; align-items: center; justify-content: center; width: 96px; height: 96px; margin-top: 285px; padding: 0; border: 0; border-radius: 50%; background: #bbbbbc; }

.out { position: relative; display: flex; align-items: center; flex: none; align-self: flex-end; height: 102px; margin-right: 49px; padding: 0 29px 6px 29.5px; border-radius: 36px; background: #d7fdd0; font-size: 49px; letter-spacing: -.52px; box-shadow: 0 1px 1px rgba(90, 110, 70, .2); }
.out .time { margin: 37px 9.5px 0 auto; color: #587055; }
.ck { width: 46px; height: 32px; margin-top: 35px; }
.o1 { width: 781px; margin-top: 40px; }
.o2 { width: 540px; margin-top: 79px; }
.o3 { width: 799px; margin-top: 12px; }
.e1 { width: 62px; height: 62px; margin-left: 16px; }
.e2 { width: 64px; height: 62px; margin-left: 6px; }
.e3 { width: 56px; height: 56px; margin-left: 9px; }
.react { position: absolute; right: 29px; top: 92px; display: flex; align-items: center; justify-content: center; width: 108px; height: 79px; border: 3px solid #f1ede6; border-radius: 40px; background: #fff; }
.scroll { position: absolute; left: 1302px; top: 387px; width: 9px; height: 1100px; border-radius: 5px; background: rgba(60, 56, 52, .5); }
```
